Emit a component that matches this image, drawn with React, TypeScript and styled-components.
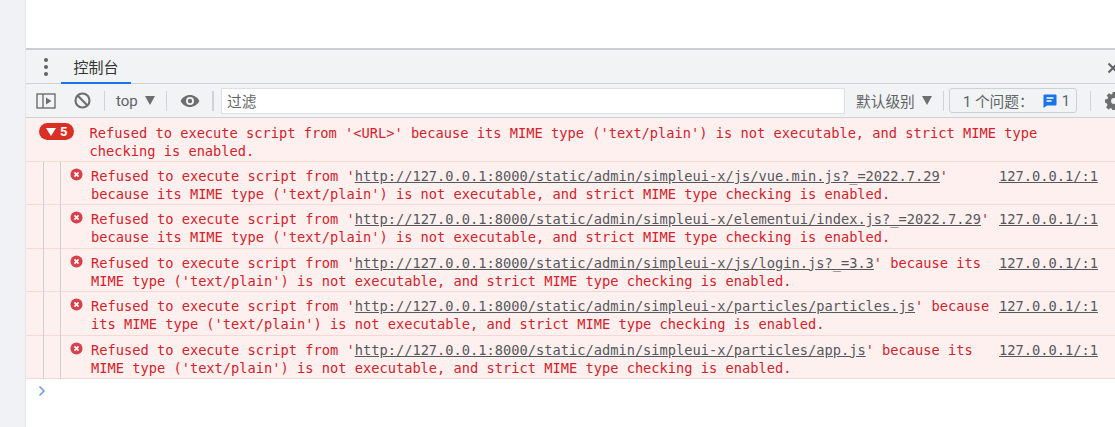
import React from 'react';
import styled, { createGlobalStyle } from 'styled-components';

const GlobalStyle = createGlobalStyle`
  html, body {
    margin: 0;
    padding: 0;
    background: #ffffff;
    overflow: hidden;
  }
`;

const messages = [
  {
    url: 'http://127.0.0.1:8000/static/admin/simpleui-x/js/vue.min.js?_=2022.7.29',
    first: "'",
    rest: "because its MIME type ('text/plain') is not executable, and strict MIME type checking is enabled.",
  },
  {
    url: 'http://127.0.0.1:8000/static/admin/simpleui-x/elementui/index.js?_=2022.7.29',
    first: "'",
    rest: "because its MIME type ('text/plain') is not executable, and strict MIME type checking is enabled.",
  },
  {
    url: 'http://127.0.0.1:8000/static/admin/simpleui-x/js/login.js?_=3.3',
    first: "' because its",
    rest: "MIME type ('text/plain') is not executable, and strict MIME type checking is enabled.",
  },
  {
    url: 'http://127.0.0.1:8000/static/admin/simpleui-x/particles/particles.js',
    first: "' because",
    rest: "its MIME type ('text/plain') is not executable, and strict MIME type checking is enabled.",
  },
  {
    url: 'http://127.0.0.1:8000/static/admin/simpleui-x/particles/app.js',
    first: "' because its",
    rest: "MIME type ('text/plain') is not executable, and strict MIME type checking is enabled.",
  },
];

const App = () => {
  return (
    <Page>
      <GlobalStyle />
      <Gutter />
      <Main>
        <Viewport />
        <TabBar>
          <Dots>
            <i />
            <i />
            <i />
          </Dots>
          <Tab>控制台</Tab>
          <CloseIcon viewBox="0 0 12 12">
            <path d="M1.5 1.5l9 9M10.5 1.5l-9 9" />
          </CloseIcon>
        </TabBar>
        <Toolbar>
          <SidebarIcon viewBox="0 0 20 16">
            <rect x="1" y="1" width="18" height="14" fill="none" stroke="#6e6e6e" strokeWidth="1.4" />
            <path d="M7 1v14" stroke="#6e6e6e" strokeWidth="1.4" />
            <path d="M10 4.5l5.5 3.5-5.5 3.5z" fill="#6e6e6e" />
          </SidebarIcon>
          <ClearIcon viewBox="0 0 16 16">
            <circle cx="8" cy="8" r="6.6" fill="none" stroke="#6e6e6e" strokeWidth="2" />
            <path d="M3.4 3.4l9.2 9.2" stroke="#6e6e6e" strokeWidth="2" />
          </ClearIcon>
          <Sep />
          <Context>
            top
            <Caret />
          </Context>
          <Sep />
          <EyeIcon viewBox="0 0 20 14">
            <path
              fillRule="evenodd"
              d="M10 1C5.8 1 2.3 3.5 0.6 7c1.7 3.5 5.2 6 9.4 6s7.7-2.5 9.4-6C17.7 3.5 14.2 1 10 1zm0 10a4 4 0 1 1 0-8 4 4 0 0 1 0 8zm0-6.2a2.2 2.2 0 1 0 0 4.4 2.2 2.2 0 0 0 0-4.4z"
              fill="#6e6e6e"
            />
          </EyeIcon>
          <Sep $thick />
          <Filter>过滤</Filter>
          <Levels>
            默认级别
            <Caret />
          </Levels>
          <Sep />
          <Issues>
            1 个问题：
            <IssueIcon viewBox="0 0 14 14">
              <path d="M1.5 0.5h11a1 1 0 0 1 1 1v9a1 1 0 0 1-1 1H4l-3.5 2.5V1.5a1 1 0 0 1 1-1z" fill="#1a73e8" />
              <path d="M3.5 4h7M3.5 7h5" stroke="#ffffff" strokeWidth="1.3" />
            </IssueIcon>
            <span>1</span>
          </Issues>
          <Sep />
          <GearIcon viewBox="0 0 16 16">
            <path
              fillRule="evenodd"
              d="M6.6 0h2.8l.4 2.2 1.3.6 1.9-1.3 2 2-1.3 1.9.6 1.3 2.2.4v2.8l-2.2.4-.6 1.3 1.3 1.9-2 2-1.9-1.3-1.3.6-.4 2.2H6.6l-.4-2.2-1.3-.6-1.9 1.3-2-2 1.3-1.9-.6-1.3L0 9.4V6.6l2.2-.4.6-1.3-1.3-1.9 2-2 1.9 1.3 1.3-.6zM8 5.4a2.6 2.6 0 1 0 0 5.2 2.6 2.6 0 0 0 0-5.2z"
              fill="#6e6e6e"
            />
          </GearIcon>
        </Toolbar>
        <GroupRow>
          <Badge>
            <BadgeCaret />5
          </Badge>
          <Message>
            Refused to execute script from '&lt;URL&gt;' because its MIME type ('text/plain') is not executable, and strict MIME type
            <br />
            checking is enabled.
          </Message>
        </GroupRow>
        {messages.map((m) => (
          <Row key={m.url}>
            <Indent />
            <ErrorIcon viewBox="0 0 14 14">
              <circle cx="7" cy="7" r="6.5" fill="#d9404a" />
              <path d="M4.8 4.8l4.4 4.4M9.2 4.8l-4.4 4.4" stroke="#ffffff" strokeWidth="1.8" />
            </ErrorIcon>
            <Message>
              Refused to execute script from '<Link>{m.url}</Link>
              {m.first}
              <br />
              {m.rest}
            </Message>
            <Source>127.0.0.1/:1</Source>
          </Row>
        ))}
        <Prompt>
          <PromptIcon viewBox="0 0 8 12">
            <path d="M1.5 1.5L6 6l-4.5 4.5" />
          </PromptIcon>
        </Prompt>
      </Main>
    </Page>
  );
};

const Page = styled.div`
  display: flex;
  width: 1115px;
  height: 427px;
  overflow: hidden;
  background: #ffffff;
  font-family: 'Roboto', 'Noto Sans CJK SC', sans-serif;
`;
const Gutter = styled.div`
  flex: 0 0 26px;
  background: #f0f2f6;
  border-right: 1px solid #e3e5e9;
  box-sizing: border-box;
`;
const Main = styled.div`
  flex: 1;
  min-width: 0;
  display: flex;
  flex-direction: column;
`;
const Viewport = styled.div`
  height: 48px;
  background: #ffffff;
  border-bottom: 2px solid #cbcdd1;
  flex-shrink: 0;
`;
const TabBar = styled.div`
  height: 34px;
  box-sizing: border-box;
  display: flex;
  align-items: center;
  padding-left: 18px;
  background: #f1f3f4;
  border-bottom: 1px solid #cdd0d4;
  flex-shrink: 0;
`;
const Dots = styled.div`
  width: 4px;
  display: flex;
  flex-direction: column;
  gap: 3px;
  flex-shrink: 0;
  > i {
    width: 4px;
    height: 4px;
    border-radius: 50%;
    background: #5f6368;
  }
`;
const Tab = styled.div`
  margin-left: 13px;
  width: 70px;
  height: 34px;
  box-sizing: border-box;
  border-bottom: 2px solid #1a73e8;
  margin-bottom: -1px;
  text-align: center;
  line-height: 37px;
  font-size: 15px;
  color: #333333;
  flex-shrink: 0;
`;
const CloseIcon = styled.svg`
  width: 12px;
  height: 12px;
  margin: 2px -4px 0 auto;
  fill: none;
  stroke: #5f6368;
  stroke-width: 2;
  flex-shrink: 0;
`;
const Toolbar = styled.div`
  height: 34px;
  display: flex;
  align-items: center;
  padding-left: 10px;
  background: #f1f3f4;
  border-bottom: 1px solid #cdd0d4;
  box-sizing: border-box;
  flex-shrink: 0;
`;
const SidebarIcon = styled.svg`
  width: 20px;
  height: 16px;
  flex-shrink: 0;
`;
const ClearIcon = styled.svg`
  width: 17px;
  height: 17px;
  margin: 0 13px 0 18px;
  flex-shrink: 0;
`;
const Sep = styled.div<{ $thick?: boolean }>`
  width: ${(p) => (p.$thick ? 2 : 1)}px;
  height: 20px;
  background: #cfd2d6;
  flex-shrink: 0;
`;
const Context = styled.div`
  display: flex;
  align-items: center;
  gap: 7px;
  width: 61px;
  box-sizing: border-box;
  padding-left: 11px;
  font-size: 15px;
  color: #5f6368;
  flex-shrink: 0;
`;
const Caret = styled.span`
  width: 0;
  height: 0;
  border-left: 5px solid transparent;
  border-right: 5px solid transparent;
  border-top: 9px solid #6e6e6e;
`;
const EyeIcon = styled.svg`
  width: 20px;
  height: 14px;
  margin: 0 12px 0 13px;
  flex-shrink: 0;
`;
const Filter = styled.div`
  width: 624px;
  height: 26px;
  margin-left: 7px;
  box-sizing: border-box;
  padding-left: 5px;
  background: #ffffff;
  border: 1px solid #dcdfe3;
  font-size: 14.7px;
  line-height: 26px;
  color: #5f6368;
  flex-shrink: 0;
`;
const Levels = styled.div`
  display: flex;
  align-items: center;
  gap: 7px;
  width: 98px;
  box-sizing: border-box;
  padding-left: 11px;
  font-size: 14.7px;
  color: #5f6368;
  flex-shrink: 0;
`;
const Issues = styled.div`
  display: flex;
  align-items: center;
  width: 128px;
  height: 25px;
  margin: 0 13px 0 5px;
  box-sizing: border-box;
  padding-left: 13px;
  border: 1px solid #cdd0d4;
  border-radius: 3px;
  font-size: 14.7px;
  color: #5f6368;
  flex-shrink: 0;
  > span {
    margin-left: 5px;
  }
`;
const IssueIcon = styled.svg`
  width: 14px;
  height: 14px;
  margin-left: 9px;
`;
const GearIcon = styled.svg`
  width: 18px;
  height: 18px;
  margin-left: 14px;
  flex-shrink: 0;
`;
const GroupRow = styled.div`
  position: relative;
  height: 44px;
  box-sizing: border-box;
  padding: 6px 0 0 63.5px;
  background: #fff0f0;
  border-bottom: 1px solid #fbd6d6;
  flex-shrink: 0;
`;
const Badge = styled.div`
  position: absolute;
  left: 13px;
  top: 5px;
  width: 35px;
  height: 17px;
  box-sizing: border-box;
  padding-left: 7px;
  display: flex;
  align-items: center;
  gap: 4px;
  background: #d93025;
  border-radius: 9px;
  color: #ffffff;
  font-size: 13px;
  font-weight: bold;
`;
const BadgeCaret = styled.span`
  width: 0;
  height: 0;
  border-left: 5px solid transparent;
  border-right: 5px solid transparent;
  border-top: 8px solid #ffffff;
`;
const Message = styled.div`
  font-family: 'DejaVu Sans Mono', 'Noto Sans CJK SC', monospace;
  font-size: 13.7px;
  line-height: 18px;
  color: #d3222a;
  white-space: nowrap;
`;
const Row = styled.div`
  position: relative;
  display: flex;
  height: 43.4px;
  box-sizing: border-box;
  padding: 5px 0 0 65px;
  background: #fff0f0;
  border-bottom: 1px solid #fbd6d6;
  flex-shrink: 0;
`;
const Indent = styled.div`
  position: absolute;
  left: 17px;
  top: 0;
  bottom: -1px;
  width: 18px;
  box-sizing: border-box;
  border-left: 1px solid #cfcfd6;
  border-right: 1px solid #cfcfd6;
`;
const ErrorIcon = styled.svg`
  position: absolute;
  left: 43.5px;
  top: 6px;
  width: 13px;
  height: 13px;
`;
const Link = styled.span`
  color: #55585c;
  text-decoration: underline;
`;
const Source = styled.div`
  position: absolute;
  left: 973px;
  top: 5px;
  font-family: 'DejaVu Sans Mono', monospace;
  font-size: 13.7px;
  line-height: 18px;
  color: #55585c;
  text-decoration: underline;
`;
const Prompt = styled.div`
  padding: 6px 0 0 12px;
`;
const PromptIcon = styled.svg`
  width: 8px;
  height: 12px;
  fill: none;
  stroke: #6f9be0;
  stroke-width: 1.6;
  display: block;
`;

export default App;
